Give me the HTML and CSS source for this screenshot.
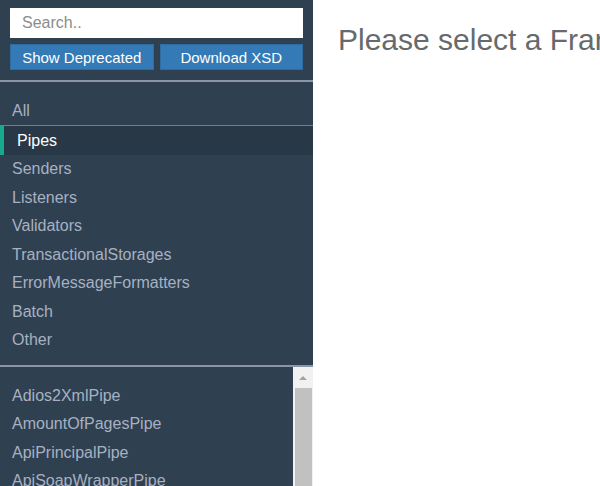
FILE: index.html
```html
<!DOCTYPE html>
<html>
<head>
<meta charset="utf-8">
<link rel="stylesheet" href="styles.css">
</head>
<body>
<div class="app">
  <aside class="sidebar">
    <div class="controls">
      <input class="search" type="text" placeholder="Search..">
      <div class="buttons">
        <button class="btn">Show Deprecated</button>
        <button class="btn">Download XSD</button>
      </div>
    </div>
    <div class="sep"></div>
    <ul class="groups">
      <li class="first">All</li>
      <li class="active">Pipes</li>
      <li>Senders</li>
      <li>Listeners</li>
      <li>Validators</li>
      <li>TransactionalStorages</li>
      <li>ErrorMessageFormatters</li>
      <li>Batch</li>
      <li>Other</li>
    </ul>
    <div class="sep sep2"></div>
    <div class="elements">
      <ul class="element-list">
        <li>Adios2XmlPipe</li>
        <li>AmountOfPagesPipe</li>
        <li>ApiPrincipalPipe</li>
        <li>ApiSoapWrapperPipe</li>
        <li>ApiStreamPipe</li>
        <li>ApiWsdlXmlValidator</li>
      </ul>
      <div class="scrollbar">
        <div class="scroll-up"><svg width="20" height="20" viewBox="0 0 20 20"><path d="M6 13h8l-4-4z" fill="#a3a3a3"/></svg></div>
        <div class="scroll-thumb"></div>
      </div>
    </div>
  </aside>
  <main class="content">
    <h1 class="title">Please select a FrankElement</h1>
  </main>
</div>
</body>
</html>
```

FILE: styles.css
```css
html, body {
  margin: 0;
  padding: 0;
  height: 100%;
  overflow: hidden;
  background: #ffffff;
}

body {
  font-family: "Liberation Sans", Arial, sans-serif;
}

.app {
  display: flex;
  height: 100%;
}

.sidebar {
  width: 313px;
  flex: 0 0 313px;
  background: #2f4050;
  display: flex;
  flex-direction: column;
  overflow: hidden;
}

.sidebar > * {
  flex-shrink: 0;
}

.controls {
  padding: 8px 10px 0 10px;
}

.search {
  display: block;
  box-sizing: border-box;
  width: 100%;
  height: 30px;
  border: none;
  outline: none;
  padding: 0 12px;
  font-family: "Liberation Sans", Arial, sans-serif;
  font-size: 16px;
  color: #555;
  background: #fff;
}

.search::placeholder {
  color: #8c8c8c;
}

.buttons {
  display: flex;
  gap: 6px;
  margin-top: 6px;
}

.btn {
  flex: 1;
  height: 26px;
  box-sizing: border-box;
  border: 1px solid #2e6da4;
  background: #337ab7;
  color: #fff;
  font-family: "Liberation Sans", Arial, sans-serif;
  font-size: 15px;
  padding: 0;
  border-radius: 0;
}

.sep {
  margin-top: 10px;
  height: 2px;
  background: #8a96a3;
}

.groups {
  list-style: none;
  margin: 15px 0 0 0;
  padding: 0;
}

.groups li,
.element-list li {
  color: #a7b1c2;
  font-size: 16px;
  line-height: 20.5px;
  padding: 4px 12px;
  white-space: nowrap;
}

.groups li.first {
  padding-bottom: 3px;
}

.groups li.active {
  background: #293846;
  color: #fff;
  border-left: 4px solid #19aa8d;
  border-top: 1px solid #19aa8d;
  padding-left: 13px;
  padding-top: 5px;
  padding-bottom: 4px;
}

.sep2 {
  margin-top: 10px;
}

.elements {
  flex: 1 0 auto;
  display: flex;
}

.element-list {
  flex: 1;
  list-style: none;
  margin: 0;
  padding: 15px 0 0 0;
}

.scrollbar {
  width: 20px;
  background: #f1f1f1;
  display: flex;
  flex-direction: column;
}

.scroll-up {
  height: 20px;
}

.scroll-up svg {
  display: block;
}

.scroll-thumb {
  flex: 1;
  margin: 1px 1px 0 2px;
  background: #c1c1c1;
}

.content {
  flex: 1;
  min-width: 0;
  overflow: hidden;
}

.title {
  margin: 22px 0 0 25px;
  font-size: 30px;
  font-weight: normal;
  color: #676a6c;
  white-space: nowrap;
  line-height: 36px;
}
```
